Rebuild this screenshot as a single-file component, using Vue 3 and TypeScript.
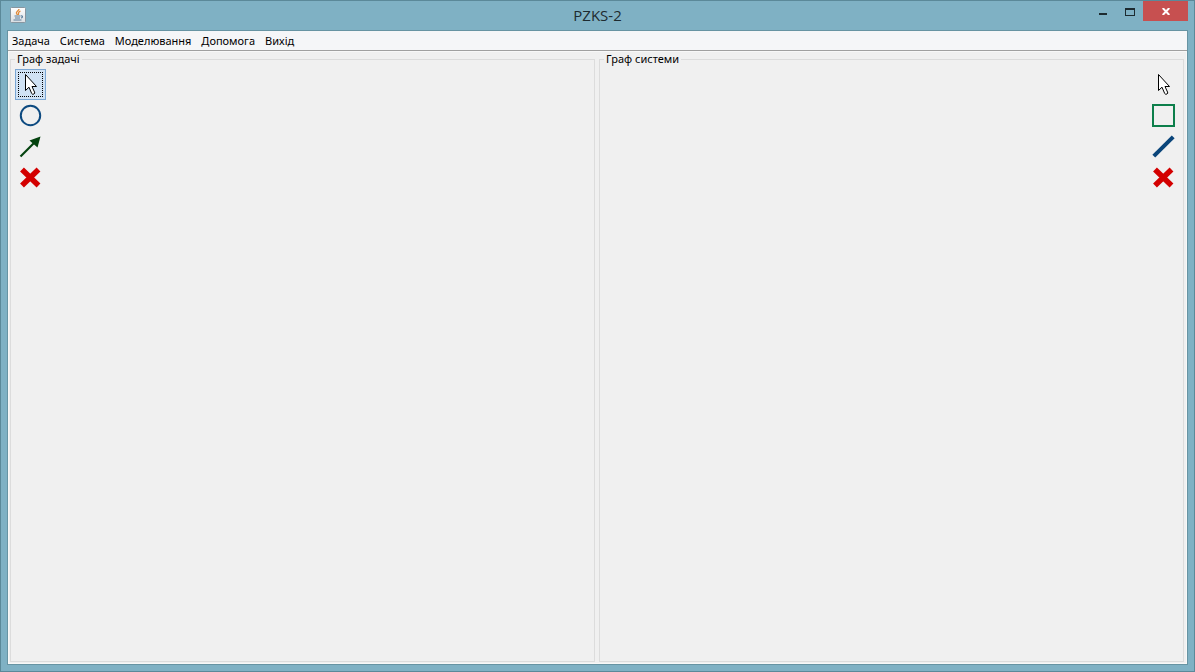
<script setup lang="ts">
import { ref } from 'vue'

type Shape = 'cursor' | 'circle' | 'arrow' | 'square' | 'line' | 'cross'
interface Tool { shape: Shape; label: string }
interface Panel { id: string; title: string; side: 'left' | 'right'; tools: Tool[] }

const menus: string[] = ['Задача', 'Система', 'Моделювання', 'Допомога', 'Вихід']
const panels: Panel[] = [
  {
    id: 'task', title: 'Граф задачі', side: 'left',
    tools: [
      { shape: 'cursor', label: 'Вибір' },
      { shape: 'circle', label: 'Вершина' },
      { shape: 'arrow', label: 'Дуга' },
      { shape: 'cross', label: 'Видалити' },
    ],
  },
  {
    id: 'system', title: 'Граф системи', side: 'right',
    tools: [
      { shape: 'cursor', label: 'Вибір' },
      { shape: 'square', label: 'Процесор' },
      { shape: 'line', label: 'Зв’язок' },
      { shape: 'cross', label: 'Видалити' },
    ],
  },
]
const selected = ref<string>('task-cursor')
</script>

<template>
  <div class="window">
    <header class="titlebar">
      <svg class="app-icon" width="16" height="16" viewBox="0 0 16 16" aria-hidden="true">
        <defs>
          <linearGradient id="tile" x1="0" y1="0" x2="0" y2="1">
            <stop offset="0" stop-color="#ffffff" />
            <stop offset="1" stop-color="#d9dee2" />
          </linearGradient>
        </defs>
        <rect x=".5" y=".5" width="15" height="15" rx="1" fill="url(#tile)" stroke="#8796a0" />
        <path d="M9 2C9 4 5.500 4.500 6.500 6.500L7.500 8M10.500 4C7.500 5 8.500 6.500 8.500 8" fill="none" stroke="#e08a3a" stroke-width="1.300" />
        <path d="M4.500 9H10.500M5 11H10M11 9C13 8.500 13 10.500 11 11M3.500 13H11.500" fill="none" stroke="#5b7f9c" stroke-width="1.100" />
      </svg>
      <h1 class="title">PZKS-2</h1>
      <div class="controls">
        <button class="control" type="button" aria-label="Згорнути">
          <svg width="8" height="15" viewBox="0 0 8 15"><rect y="12" width="8" height="2" fill="#1d2b30" /></svg>
        </button>
        <button class="control" type="button" aria-label="Розгорнути">
          <svg width="10" height="15" viewBox="0 0 10 15"><path d="M0 7H10V15H0ZM1 9V14H9V9Z" fill="#1d2b30" fill-rule="evenodd" /></svg>
        </button>
        <button class="control close" type="button" aria-label="Закрити">
          <svg width="8" height="7" viewBox="0 0 8 7"><path d="M.7 0L7.300 7M7.300 0L.7 7" stroke="#fff" stroke-width="2" /></svg>
        </button>
      </div>
    </header>

    <div class="client">
      <nav class="menubar">
        <button v-for="menu in menus" :key="menu" class="menu" type="button">{{ menu }}</button>
      </nav>
      <main class="workspace">
        <fieldset v-for="panel in panels" :key="panel.id" class="panel" :class="panel.side">
          <legend class="legend">{{ panel.title }}</legend>
          <div class="tools">
            <button
              v-for="tool in panel.tools"
              :key="tool.shape"
              class="tool"
              :class="{ selected: selected === `${panel.id}-${tool.shape}` }"
              type="button"
              :aria-label="tool.label"
              :aria-pressed="selected === `${panel.id}-${tool.shape}`"
              @click="selected = `${panel.id}-${tool.shape}`"
            >
              <svg width="25" height="25" viewBox="0 0 25 25" aria-hidden="true">
                <path v-if="tool.shape === 'cursor'" d="M7.500 2.500V18.500L11 15.200L13.700 21.500Q14.500 22.800 16 22Q17.300 21.200 16.500 20L14 14.500H18.500Z" fill="#fff" stroke="#000" />
                <circle v-else-if="tool.shape === 'circle'" cx="12.500" cy="12.500" r="9.700" fill="none" stroke="#0d4a80" stroke-width="2" />
                <g v-else-if="tool.shape === 'arrow'" fill="#04430f">
                  <path d="M2.500 22.500L17 8" stroke="#04430f" stroke-width="2.200" />
                  <path d="M22.500 2.500L11.500 6.500L19.500 13.500Z" />
                </g>
                <rect v-else-if="tool.shape === 'square'" x="2" y="2" width="21" height="21" fill="none" stroke="#0d7f4b" stroke-width="2" />
                <path v-else-if="tool.shape === 'line'" d="M2.800 22.200L22.200 2.800" stroke="#0a457a" stroke-width="4" />
                <path v-else d="M4 4.500L20.500 20.500M20.500 4.500L4 20.500" stroke="#d30000" stroke-width="5.500" />
              </svg>
            </button>
          </div>
        </fieldset>
      </main>
    </div>
  </div>
</template>

<style>
body {
  margin: 0;
}
</style>

<style scoped>
.window {
  box-sizing: border-box;
  display: flex;
  flex-direction: column;
  min-height: 100vh;
  padding: 0 6px 6px;
  border: 1px solid #5b8999;
  background: #7fb1c4;
  font-family: "Noto Sans", "Open Sans", sans-serif;
  color: #000;
}
.titlebar {
  display: grid;
  grid-template-columns: 1fr auto 1fr;
  height: 29px;
}
.app-icon {
  margin: 6px 0 0 3px;
}
.title {
  margin: 0;
  font: 400 15px/29px "Open Sans", sans-serif;
  color: #1d2b30;
}
.controls {
  display: flex;
  justify-content: flex-end;
  align-items: flex-start;
}
.control {
  display: flex;
  justify-content: center;
  width: 27px;
  height: 20px;
  padding: 0;
  border: 0;
  background: none;
}
.control.close {
  align-items: center;
  width: 45px;
  background: #c75050;
}
.client {
  flex: 1;
  display: flex;
  flex-direction: column;
  border: 1px solid #6794a3;
  background: #f0f0f0;
}
.menubar {
  display: flex;
  gap: 10px;
  height: 19px;
  padding: 0 4px;
  border-bottom: 1px solid #a0a0a0;
  background: #f5f6f8;
}
.menu {
  padding: 0;
  border: 0;
  background: none;
  font: 11px/20px "Noto Sans", "Open Sans", sans-serif;
  color: #000;
}
.workspace {
  flex: 1;
  display: grid;
  grid-template-columns: 1fr 1fr;
  gap: 4px;
  padding: 0 2px 1px 1px;
  border: 1px solid #f8f8f8;
}
.panel {
  min-width: 0;
  margin: 0;
  padding: 0 4px;
  border: 1px solid #dcdcdc;
}
.legend {
  height: 14px;
  padding: 0 2px;
  font-size: 11px;
  line-height: 14px;
}
.tools {
  display: flex;
  flex-direction: column;
  align-items: flex-start;
  padding-top: 3px;
}
.right .tools {
  align-items: flex-end;
}
.tool {
  display: grid;
  place-items: center;
  box-sizing: border-box;
  width: 31px;
  height: 31px;
  padding: 0;
  border: 1px solid transparent;
  background: none;
}
.tool.selected {
  border-color: #7ba7d4;
  background: #d0e2f4;
  outline: 1px dotted #000;
  outline-offset: -4px;
}
</style>
